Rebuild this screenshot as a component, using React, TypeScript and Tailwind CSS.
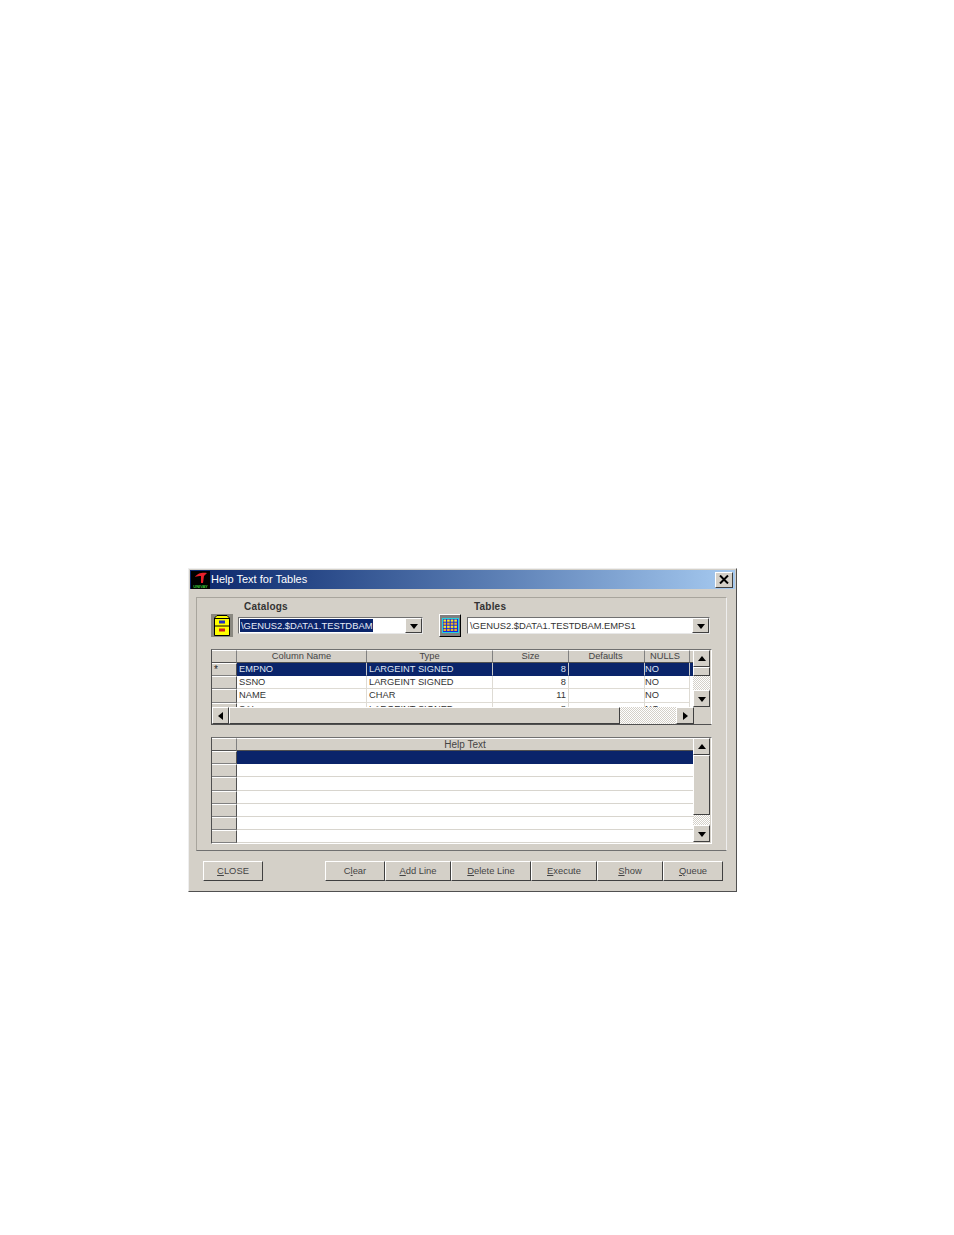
const raised = "border border-t-white border-l-white border-r-[#404040] border-b-[#404040] bg-[#d4d0c8]";
const dither = "bg-[repeating-conic-gradient(#d4d0c8_0_25%,#ffffff_0_50%)] bg-[length:2px_2px]";

function Arrow({ dir }: { dir: "up" | "down" | "left" | "right" }) {
  const points = {
    up: "4,1 0,6 8,6",
    down: "0,2 8,2 4,7",
    left: "6,0 6,8 1,4",
    right: "2,0 2,8 7,4",
  };
  return (
    <svg width="8" height="8" viewBox="0 0 8 8">
      <polygon points={points[dir]} fill="#000" />
    </svg>
  );
}

function ScrollBtn({ dir, className }: { dir: "up" | "down" | "left" | "right"; className: string }) {
  return <div className={`flex items-center justify-center shrink-0 ${raised} ${className}`}><Arrow dir={dir} /></div>;
}

function Logo() {
  return (
    <svg width="19" height="18" viewBox="0 0 19 18" className="shrink-0 ml-[1px] bg-black">
      <path d="M4 6 C6 2 12 1 16 2 L13 5 L12 12 L10 12 L10 5 C8 5 6 5 4 6 Z" fill="#e8202a" />
      <text x="9.5" y="16.5" textAnchor="middle" fontSize="4" fontWeight="700" fill="#3cc83c" fontFamily="Liberation Sans, sans-serif">UNIVAY</text>
    </svg>
  );
}

function CabinetIcon() {
  return (
    <div className="w-[22px] h-[23px] bg-[#8a8880] flex items-center justify-center shrink-0">
      <svg width="16" height="21" viewBox="0 0 16 21">
        <path d="M3 .5 H13 L15.5 3 V20.5 H.5 V3 Z" fill="#ffff00" stroke="#000" />
        <path d="M1 11 H15 M1 3.5 H15" stroke="#000" />
        <rect x="5" y="5.5" width="6" height="3" fill="#2030c0" />
        <rect x="5" y="13.5" width="6" height="3" fill="#d02020" />
      </svg>
    </div>
  );
}

function GridIcon() {
  const dots = [];
  for (let r = 0; r < 4; r++) {
    for (let c = 0; c < 4; c++) {
      dots.push(<rect key={`${r}-${c}`} x={1.5 + c * 3.6} y={1.5 + r * 3.1} width="2.6" height="2.2" fill={r % 2 === 0 ? "#ffe820" : "#f0b020"} />);
    }
  }
  return (
    <div className="w-[22px] h-[23px] bg-[#808080] border border-t-white border-l-white border-r-black border-b-black flex items-center justify-center shrink-0">
      <svg width="17" height="15" viewBox="0 0 17 15">
        <rect width="17" height="15" fill="#1428e0" />
        <rect x=".5" y=".5" width="16" height="14" fill="none" stroke="#20d0e0" />
        {dots}
      </svg>
    </div>
  );
}

function Combo({ value, selected, className }: { value: string; selected?: boolean; className: string }) {
  return (
    <div className={`h-[17px] flex items-center bg-white border border-t-[#707070] border-l-[#707070] border-r-[#e8e8e8] border-b-[#e8e8e8] ${className}`}>
      <div className="flex-1 min-w-0 pl-[1px] h-full flex items-center">
        <span className={`px-[1px] leading-[13px] whitespace-nowrap text-[9.4px] ${selected ? "bg-[#0a246a] text-[#e8ecf8]" : "text-[#333]"}`}>{value}</span>
      </div>
      <ScrollBtn dir="down" className="w-[17px] h-[15px]" />
    </div>
  );
}

const columns = [
  { name: "Column Name", cls: "w-[130px]", align: "text-left pl-[2px]", head: "" },
  { name: "Type", cls: "w-[126px]", align: "text-left pl-[2px]", head: "" },
  { name: "Size", cls: "w-[76px]", align: "text-right pr-[2px]", head: "" },
  { name: "Defaults", cls: "w-[76px]", align: "text-left pl-[2px]", head: "pr-[2px]" },
  { name: "NULLS", cls: "w-[45px]", align: "text-left pl-[0px]", head: "pr-[4px]" },
];

const rows = [
  ["EMPNO", "LARGEINT SIGNED", "8", "", "NO"],
  ["SSNO", "LARGEINT SIGNED", "8", "", "NO"],
  ["NAME", "CHAR", "11", "", "NO"],
  ["SAL", "LARGEINT SIGNED", "8", "", "NO"],
];

function HeaderCell({ className, children }: { className: string; children?: React.ReactNode }) {
  return (
    <div className={`h-[13px] shrink-0 bg-[#d4d0c8] border-r border-r-[#808080] border-b border-b-[#505050] border-t border-t-white text-center text-[#444] ${className}`}>
      {children}
    </div>
  );
}

function RowHead({ mark }: { mark?: string }) {
  return (
    <div className="w-[25px] h-[13.2px] shrink-0 bg-[#d4d0c8] border-r border-r-[#505050] border-t border-t-white border-b border-b-[#808080] leading-[12px] pl-[2px] text-[#222]">
      {mark}
    </div>
  );
}

function ColumnsGrid() {
  return (
    <div className="w-[501px] h-[76px] border-t border-l border-t-[#707070] border-l-[#505050] bg-[#d4d0c8] flex flex-col border-r border-r-white border-b border-b-[#505050]">
      <div className="flex h-[57px]">
        <div className="w-[481px] h-[57px] overflow-hidden">
          <div className="flex">
            <HeaderCell className="w-[25px] border-r-[#505050]" />
            {columns.map((c) => (
              <HeaderCell key={c.name} className={`${c.cls} ${c.head} text-[9.3px] leading-[10px]`}>{c.name}</HeaderCell>
            ))}
            <HeaderCell className="w-[4px] border-r-0" />
          </div>
          {rows.map((row, i) => (
            <div key={row[0]} className="flex">
              <RowHead mark={i === 0 ? "*" : undefined} />
              {columns.map((c, j) => (
                <div
                  key={c.name}
                  className={`${c.cls} h-[13.2px] shrink-0 text-[9.3px] leading-[13px] whitespace-nowrap border-r border-b ${c.align} ${
                    i === 0 ? "bg-[#0a246a] text-[#dfe4f2] border-[#0a246a] border-r-[#c8c8c8]" : "bg-white text-[#333] border-[#dedbd4]"
                  }`}
                >
                  {row[j]}
                </div>
              ))}
              <div className={`w-[4px] h-[13.2px] shrink-0 ${i === 0 ? "bg-[#0a246a]" : "bg-white"}`} />
            </div>
          ))}
        </div>
        <div className="w-[17px] flex flex-col">
          <ScrollBtn dir="up" className="w-[17px] h-[17px]" />
          <div className={`w-[17px] h-[9px] shrink-0 ${raised}`} />
          <div className={`w-[17px] h-[14px] shrink-0 ${dither}`} />
          <ScrollBtn dir="down" className="w-[17px] h-[17px]" />
        </div>
      </div>
      <div className="flex h-[17px]">
        <ScrollBtn dir="left" className="w-[17px] h-[17px]" />
        <div className={`w-[391px] h-[17px] shrink-0 ${raised}`} />
        <div className={`w-[56px] h-[17px] shrink-0 ${dither}`} />
        <ScrollBtn dir="right" className="w-[18px] h-[17px]" />
      </div>
    </div>
  );
}

function HelpGrid() {
  const lines = [0, 1, 2, 3, 4, 5, 6];
  return (
    <div className="w-[501px] h-[107px] mt-[12px] border-t border-l border-t-[#707070] border-l-[#505050] border-r border-r-white border-b border-b-white bg-[#d4d0c8] flex">
      <div className="w-[481px]">
        <div className="flex">
          <HeaderCell className="w-[25px] border-r-[#505050]" />
          <HeaderCell className="w-[456px] border-r-0 leading-[11px]">Help Text</HeaderCell>
        </div>
        {lines.map((i) => (
          <div key={i} className="flex">
            <RowHead />
            <div className={`w-[456px] h-[13.2px] border-b ${i === 0 ? "bg-[#0a246a] border-[#0a246a]" : "bg-white border-[#d8d5ce]"}`} />
          </div>
        ))}
      </div>
      <div className="w-[17px] flex flex-col">
        <ScrollBtn dir="up" className="w-[17px] h-[17px]" />
        <div className={`w-[17px] h-[60px] shrink-0 ${raised}`} />
        <div className={`w-[17px] h-[10px] shrink-0 ${dither}`} />
        <ScrollBtn dir="down" className="w-[17px] h-[17px]" />
      </div>
    </div>
  );
}

function Btn({ className, children }: { className: string; children: React.ReactNode }) {
  return <div className={`h-[20px] shrink-0 flex items-center justify-center text-[9.4px] text-[#444] ${raised} ${className}`}><span>{children}</span></div>;
}

export default function App() {
  return (
    <div className="min-h-[1235px] bg-white pt-[568px] pl-[188px] font-['Liberation_Sans',Arial,sans-serif] text-[10px]">
      <div className="w-[549px] h-[324px] bg-[#d4d0c8] border border-t-[#eeeeee] border-l-[#eeeeee] border-r-[#505050] border-b-[#505050] p-[1px]">
        <div className="h-[19px] flex items-center bg-gradient-to-r from-[#0a246a] to-[#a6caf0]">
          <Logo />
          <span className="ml-[1px] text-[11px] text-white">Help Text for Tables</span>
          <div className={`ml-auto mr-[2px] w-[18px] h-[16px] flex items-center justify-center ${raised}`}>
            <svg width="10" height="9" viewBox="0 0 10 9">
              <path d="M1 0.5 L9 8.5 M9 0.5 L1 8.5" stroke="#000" strokeWidth="2" />
            </svg>
          </div>
        </div>

        <div className="ml-[6px] mt-[8px] w-[531px] h-[254px] border border-t-[#a8a59d] border-l-[#a8a59d] border-r-[#eeeeee] border-b-[#707070] pl-[14px]">
          <div className="flex h-[15px] pt-[3px] leading-[12px] font-bold text-[#333] tracking-[0.2px]">
            <span className="ml-[33px] w-[230px]">Catalogs</span>
            <span>Tables</span>
          </div>
          <div className="flex items-center mt-[1px] h-[23px]">
            <CabinetIcon />
            <Combo value="\GENUS2.$DATA1.TESTDBAM" selected className="ml-[5px] w-[185px]" />
            <div className="ml-[16px]"><GridIcon /></div>
            <Combo value="\GENUS2.$DATA1.TESTDBAM.EMPS1" className="ml-[6px] w-[243px]" />
          </div>
          <div className="mt-[12px]"><ColumnsGrid /></div>
          <HelpGrid />
        </div>

        <div className="flex mt-[10px] ml-[13px]">
          <Btn className="w-[60px]"><span className="underline">C</span>LOSE</Btn>
          <Btn className="ml-[62px] w-[60px]">C<span className="underline">l</span>ear</Btn>
          <Btn className="w-[66px]"><span className="underline">A</span>dd Line</Btn>
          <Btn className="w-[80px]"><span className="underline">D</span>elete Line</Btn>
          <Btn className="w-[66px]"><span className="underline">E</span>xecute</Btn>
          <Btn className="w-[66px]"><span className="underline">S</span>how</Btn>
          <Btn className="w-[60px]"><span className="underline">Q</span>ueue</Btn>
        </div>
      </div>
    </div>
  );
}
